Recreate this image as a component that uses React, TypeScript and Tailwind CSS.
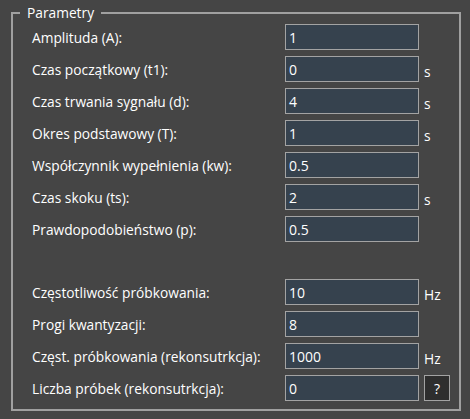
import React from "react";

type Row = { label: string; value: string; unit?: string; button?: boolean };

const rowsA: Row[] = [
  { label: "Amplituda (A):", value: "1" },
  { label: "Czas początkowy (t1):", value: "0", unit: "s" },
  { label: "Czas trwania sygnału (d):", value: "4", unit: "s" },
  { label: "Okres podstawowy (T):", value: "1", unit: "s" },
  { label: "Współczynnik wypełnienia (kw):", value: "0.5" },
  { label: "Czas skoku (ts):", value: "2", unit: "s" },
  { label: "Prawdopodobieństwo (p):", value: "0.5" },
];

const rowsB: Row[] = [
  { label: "Częstotliwość próbkowania:", value: "10", unit: "Hz" },
  { label: "Progi kwantyzacji:", value: "8" },
  { label: "Częst. próbkowania (rekonsutrkcja):", value: "1000", unit: "Hz" },
  { label: "Liczba próbek (rekonsutrkcja):", value: "0", button: true },
];

function FieldRow({ r }: { r: Row }) {
  return (
    <div className="flex h-[26px] items-center">
      <div className="w-[253px] pt-[3px] text-[13.75px] text-white">{r.label}</div>
      <div className="flex h-[26px] w-[134px] items-center border border-[#a3a3a3] bg-[#36424e] pl-[3px] text-[14px] text-white">
        {r.value}
      </div>
      {r.unit && <div className="ml-[5px] pt-[6px] text-[13.75px] text-white">{r.unit}</div>}
      {r.button && (
        <div className="ml-[5px] flex h-[26px] w-[26px] items-center justify-center border border-[#a3a3a3] bg-[#2e2e2e] text-[14px] text-white">
          ?
        </div>
      )}
    </div>
  );
}

export default function App() {
  return (
    <div
      className="h-[419px] w-[470px] bg-[#454545] pl-[11px] pr-[9px] pt-[3px]"
      style={{ fontFamily: '"Open Sans", "Noto Sans", sans-serif' }}
    >
      <fieldset className="h-[408px] border-2 border-[#a0a0a0] p-0">
        <legend className="ml-[7px] px-[7px] text-[13.75px] leading-[19px] text-white">Parametry</legend>
        <div className="pl-[19px] pt-[2px]">
          <div className="flex flex-col gap-[6px]">
            {rowsA.map((r) => (
              <FieldRow key={r.label} r={r} />
            ))}
          </div>
          <div className="mt-[37px] flex flex-col gap-[6px]">
            {rowsB.map((r) => (
              <FieldRow key={r.label} r={r} />
            ))}
          </div>
        </div>
      </fieldset>
    </div>
  );
}
